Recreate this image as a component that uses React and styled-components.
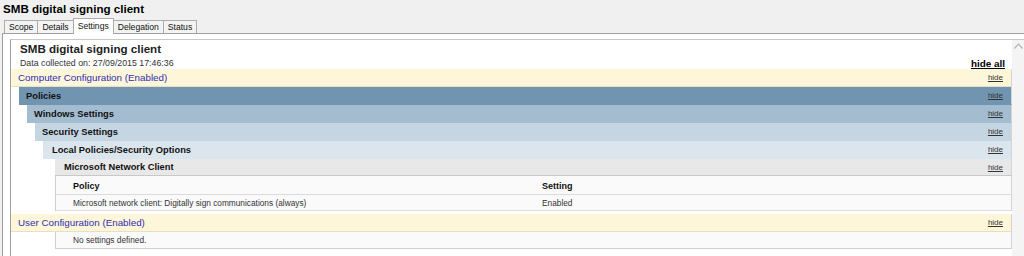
import React from "react";
import styled, { createGlobalStyle } from "styled-components";

const GlobalStyle = createGlobalStyle`
  html, body {
    margin: 0;
    padding: 0;
    background: #f0f0f0;
  }
  body {
    font-family: "Liberation Sans", Arial, sans-serif;
    color: #000;
  }
`;

const Window = styled.div`
  width: 1024px;
  height: 256px;
  overflow: hidden;
  display: flex;
  flex-direction: column;
`;

const Title = styled.div`
  height: 18px;
  box-sizing: border-box;
  padding: 2px 0 0 3px;
  font-size: 11.6px;
  line-height: 14px;
  font-weight: bold;
`;

const TabStrip = styled.div`
  display: flex;
  align-items: flex-end;
  height: 15px;
  padding-left: 4px;
  position: relative;
  z-index: 1;
`;

const Tab = styled.div`
  box-sizing: border-box;
  height: ${(p) => (p.$active ? "16px" : "13px")};
  margin-bottom: ${(p) => (p.$active ? "-1px" : "0")};
  margin-left: -1px;
  padding: ${(p) => (p.$active ? "2px 4px 0" : "1px 4px 0")};
  border: 1px solid #acacac;
  border-bottom: none;
  background: ${(p) => (p.$active ? "#fff" : "#f3f3f3")};
  font-size: 8.6px;
  line-height: 10px;
  color: #111;
  &:first-child {
    margin-left: 0;
  }
`;

const Panel = styled.div`
  flex: 1;
  margin-left: 2px;
  border-top: 1px solid #a0a0a0;
  border-left: 1px solid #a0a0a0;
  background: #fff;
  padding: 5px 0 0 7px;
  display: flex;
  min-height: 0;
`;

const Frame = styled.div`
  flex: 1;
  display: flex;
  border-top: 1px solid #c8c8c8;
  border-left: 1px solid #a0a0a0;
`;

const Report = styled.div`
  flex: 1;
  display: flex;
  flex-direction: column;
`;

const Scrollbar = styled.div`
  width: 12px;
  background: #f4f4f4;
  display: flex;
  justify-content: center;
  padding-top: 3px;
`;

const ReportTitle = styled.div`
  padding: 2px 0 0 9px;
  font-size: 11.6px;
  line-height: 14px;
  font-weight: bold;
  color: #222;
`;

const MetaRow = styled.div`
  display: flex;
  justify-content: space-between;
  align-items: flex-end;
  height: 13px;
  padding: 0 7px 0 9px;
`;

const Collected = styled.span`
  font-size: 8.8px;
  line-height: 11px;
  color: #333;
`;

const HideAll = styled.span`
  font-size: 9.9px;
  line-height: 11px;
  font-weight: bold;
  text-decoration: underline;
`;

const Row = styled.div`
  box-sizing: border-box;
  height: ${(p) => p.$h || 18}px;
  margin-left: ${(p) => p.$indent}px;
  margin-top: ${(p) => p.$gap || 0}px;
  padding: 0 8px 0 ${(p) => p.$pad}px;
  display: flex;
  justify-content: space-between;
  align-items: center;
  background: ${(p) => p.$bg};
  border-right: 1px solid #d4d4d4;
  border-bottom: 1px solid ${(p) => p.$line || "transparent"};
`;

const ConfigLabel = styled.span`
  font-size: 9.8px;
  color: #2e2eb4;
`;

const GroupLabel = styled.span`
  font-size: 9.3px;
  font-weight: bold;
  color: #111;
`;

const Hide = styled.span`
  font-size: 8px;
  color: #333;
  text-decoration: underline;
`;

const Table = styled.div`
  margin-left: 44px;
  border-left: 1px solid #cfcfcf;
  border-right: 1px solid #d4d4d4;
  background: #fafafa;
`;

const TableRow = styled.div`
  box-sizing: border-box;
  display: grid;
  grid-template-columns: 469px 1fr;
  align-items: ${(p) => (p.$head ? "end" : "center")};
  height: ${(p) => p.$h}px;
  padding: 0 0 ${(p) => (p.$head ? "3px" : "0")} 17px;
  border-bottom: 1px solid #dcdcdc;
`;

const HeadCell = styled.span`
  font-size: 9px;
  font-weight: bold;
  color: #111;
`;

const Cell = styled.span`
  font-size: 8.3px;
  color: #333;
`;

const Empty = styled.div`
  box-sizing: border-box;
  height: 17px;
  margin-left: 44px;
  padding-left: 17px;
  display: flex;
  align-items: center;
  background: #fafafa;
  border-left: 1px solid #cfcfcf;
  border-right: 1px solid #d4d4d4;
  border-bottom: 1px solid #d0d0d0;
`;

const groups = [
  { label: "Policies", indent: 8, bg: "#7195b0" },
  { label: "Windows Settings", indent: 16, bg: "#a4bccf" },
  { label: "Security Settings", indent: 24, bg: "#c5d6e2" },
  { label: "Local Policies/Security Options", indent: 32, bg: "#dbe5ed", pad: 9 },
  { label: "Microsoft Network Client", indent: 44, bg: "#e8e8e8", pad: 9, h: 17, line: "#c8c8c8" }
];

const tabs = ["Scope", "Details", "Settings", "Delegation", "Status"];

const ChevronUp = () => (
  <svg width="9" height="6" viewBox="0 0 9 6">
    <polyline points="0.5,5.5 4.5,1.2 8.5,5.5" fill="none" stroke="#b4b4b4" strokeWidth="1.2" />
  </svg>
);

const App = () => {
  return (
    <Window>
      <GlobalStyle />
      <Title>SMB digital signing client</Title>
      <TabStrip>
        {tabs.map((t) => (
          <Tab key={t} $active={t === "Settings"}>
            {t}
          </Tab>
        ))}
      </TabStrip>
      <Panel>
        <Frame>
          <Report>
            <ReportTitle>SMB digital signing client</ReportTitle>
            <MetaRow>
              <Collected>Data collected on: 27/09/2015 17:46:36</Collected>
              <HideAll>hide all</HideAll>
            </MetaRow>
            <Row $indent={0} $pad={7} $bg="#fef6d9" $line="#e6dfc4">
              <ConfigLabel>Computer Configuration (Enabled)</ConfigLabel>
              <Hide>hide</Hide>
            </Row>
            {groups.map((g) => (
              <Row key={g.label} $indent={g.indent} $pad={g.pad || 7} $bg={g.bg} $h={g.h} $line={g.line}>
                <GroupLabel>{g.label}</GroupLabel>
                <Hide>hide</Hide>
              </Row>
            ))}
            <Table>
              <TableRow $head $h={19}>
                <HeadCell>Policy</HeadCell>
                <HeadCell>Setting</HeadCell>
              </TableRow>
              <TableRow $h={16}>
                <Cell>Microsoft network client: Digitally sign communications (always)</Cell>
                <Cell>Enabled</Cell>
              </TableRow>
            </Table>
            <Row $indent={0} $pad={7} $bg="#fef6d9" $gap={3} $line="#e6dfc4">
              <ConfigLabel>User Configuration (Enabled)</ConfigLabel>
              <Hide>hide</Hide>
            </Row>
            <Empty>
              <Cell>No settings defined.</Cell>
            </Empty>
          </Report>
          <Scrollbar>
            <ChevronUp />
          </Scrollbar>
        </Frame>
      </Panel>
    </Window>
  );
};

export default App;
